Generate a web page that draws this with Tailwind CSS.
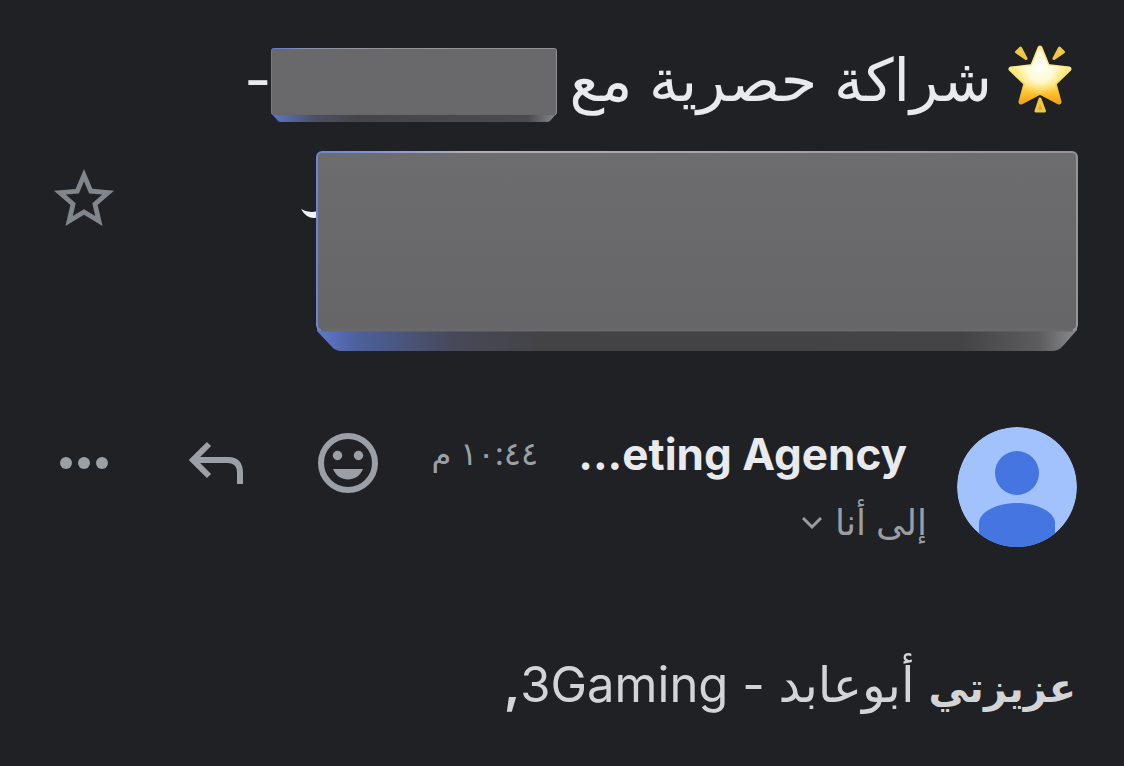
<!DOCTYPE html>
<html lang="ar" dir="rtl">
<head>
  <meta charset="UTF-8" />
  <meta name="viewport" content="width=device-width, initial-scale=1.0" />
  <title>شراكة حصرية</title>
  <script src="https://cdn.jsdelivr.net/npm/@tailwindcss/browser@4"></script>
</head>
<body class="min-h-screen bg-[#202125] font-['Inter','DejaVu_Sans',sans-serif] text-[#e8eaed]">
  <!-- Subject -->
  <header class="flex items-center justify-between pt-10 pr-[46px] pl-[54px]">
    <h1 class="min-w-0 text-[59px] leading-[80px] font-normal">
      <span class="flex h-[90px] items-start">
        <svg class="mr-1 ml-3.5 h-[76px] w-[68px] shrink-0" viewBox="0 0 68 76" aria-hidden="true">
          <defs>
            <linearGradient id="starFill" x1="0" y1="0" x2="0" y2="1">
              <stop offset="0" stop-color="#fbe07c" />
              <stop offset="0.35" stop-color="#fdeb8c" />
              <stop offset="0.62" stop-color="#fddc58" />
              <stop offset="0.85" stop-color="#fbc02c" />
              <stop offset="1" stop-color="#f2a51a" />
            </linearGradient>
            <radialGradient id="starGlow" cx="34" cy="28" r="27" gradientUnits="userSpaceOnUse">
              <stop offset="0" stop-color="#fffffa" />
              <stop offset="0.5" stop-color="#fffde0" stop-opacity="0.9" />
              <stop offset="1" stop-color="#fff6b0" stop-opacity="0" />
            </radialGradient>
            <linearGradient id="rayFill" x1="0" y1="0" x2="0" y2="1">
              <stop offset="0" stop-color="#f8df62" />
              <stop offset="1" stop-color="#e9a523" />
            </linearGradient>
          </defs>
          <path d="M34 8 L41.500 26.500 L63 29 L48 43.500 L53 62 L34 52 L15 62 L20 43.500 L5 29 L26.500 26.500 Z" fill="url(#starFill)" stroke="url(#starFill)" stroke-width="5" stroke-linejoin="round" />
          <path d="M34 8 L41.500 26.500 L63 29 L48 43.500 L53 62 L34 52 L15 62 L20 43.500 L5 29 L26.500 26.500 Z" fill="url(#starGlow)" stroke="url(#starGlow)" stroke-width="2" stroke-linejoin="round" />
          <path d="M10.500 12 L14.500 8 L20 18.500 Z M57.500 12 L53.500 8 L48 18.500 Z M34 59 L30 71 L38.500 71 Z" fill="url(#rayFill)" stroke="#f0c645" stroke-width="3" stroke-linejoin="round" />
        </svg>
        <span class="whitespace-nowrap">شراكة حصرية مع</span>
        <svg class="mt-[7px] mr-3 h-[76px] w-[286px] shrink-0" viewBox="0 0 286 76" aria-hidden="true">
          <defs>
            <linearGradient id="smallEdge">
              <stop offset="0" stop-color="#5c7cd0" />
              <stop offset="0.13" stop-color="#8d92a6" />
              <stop offset="0.4" stop-color="#98989a" />
              <stop offset="1" stop-color="#929294" />
            </linearGradient>
            <linearGradient id="smallBase">
              <stop offset="0" stop-color="#5c78c8" />
              <stop offset="0.15" stop-color="#4b5068" />
              <stop offset="0.3" stop-color="#454547" />
              <stop offset="0.9" stop-color="#4c4c4e" />
              <stop offset="1" stop-color="#8a8a8c" />
            </linearGradient>
          </defs>
          <path d="M0 66 L286 66 L279 74 Q278 75 276 75 L10 75 Q8 75 7 74 Z" fill="url(#smallBase)" />
          <rect x="0.5" y="1.5" width="285" height="66" rx="2" fill="#69696b" stroke="url(#smallEdge)" />
          <path d="M2 67.500 H284" stroke="#666668" />
        </svg>
        <span>-</span>
      </span>
      <span class="mt-5 flex items-start">
        <svg class="h-[202px] w-[778px]" viewBox="0 0 778 202" aria-hidden="true">
          <defs>
            <linearGradient id="topEdge">
              <stop offset="0" stop-color="#6d83da" />
              <stop offset="0.08" stop-color="#8793d0" />
              <stop offset="0.2" stop-color="#b0b0b4" />
              <stop offset="1" stop-color="#959597" />
            </linearGradient>
            <linearGradient id="face" x1="0" y1="0" x2="0" y2="1">
              <stop offset="0" stop-color="#6d6d6f" />
              <stop offset="0.5" stop-color="#69696b" />
              <stop offset="1" stop-color="#666668" />
            </linearGradient>
            <linearGradient id="base">
              <stop offset="0" stop-color="#5f79cc" />
              <stop offset="0.05" stop-color="#4d619f" />
              <stop offset="0.18" stop-color="#474958" />
              <stop offset="0.3" stop-color="#434345" />
              <stop offset="0.85" stop-color="#444446" />
              <stop offset="0.95" stop-color="#5c5c5e" />
              <stop offset="1" stop-color="#8b8b8d" />
            </linearGradient>
          </defs>
          <path d="M1 59 Q8 63.500 18 61 L18 67.500 Q7 70 1 59 Z" fill="#f4f4f6" />
          <path d="M17 176 L777 176 L777 180 L762 197 Q758 201 752 201 L42 201 Q36 201 33 198 L17 181 Z" fill="url(#base)" />
          <rect x="17" y="2" width="760" height="178" rx="5" fill="url(#face)" stroke="url(#topEdge)" stroke-width="2" />
          <path d="M21 180 H773" stroke="#69696b" stroke-width="3" />
        </svg>
      </span>
    </h1>
    <button type="button" aria-label="تمييز بنجمة" class="mt-1.5 shrink-0">
      <svg class="size-[60px]" viewBox="2 2 20 20" fill="#80868b" aria-hidden="true">
        <path d="M22 9.24l-7.19-.62L12 2 9.19 8.63 2 9.24l5.46 4.73L5.82 21 12 17.27 18.18 21l-1.63-7.03L22 9.24zM12 15.4l-3.76 2.27 1-4.28-3.32-2.88 4.38-.38L12 6.1l1.71 4.04 4.38.38-3.32 2.88 1 4.28L12 15.4z" />
      </svg>
    </button>
  </header>

  <!-- Sender -->
  <section class="mt-[75px] flex items-start pr-[47px] pl-[54px]">
    <svg class="size-[120px] shrink-0 rounded-full" viewBox="0 0 120 120" role="img" aria-label="صورة المرسل">
      <circle cx="60" cy="60" r="60" fill="#a1c2fd" />
      <circle cx="60" cy="46" r="22" fill="#4475e0" />
      <path d="M22 120 V96 C22 84 42 76 60 76 C78 76 98 84 98 96 V120 Z" fill="#4475e0" />
    </svg>
    <div class="mr-[30px] min-w-0">
      <div class="flex h-[54px] items-center whitespace-nowrap">
        <span class="mr-5 text-[44px] font-bold" dir="ltr">...eting Agency</span>
        <time class="mr-10 text-[32px] text-[#9aa0a6]">١٠:٤٤ م</time>
      </div>
      <button type="button" class="flex h-[82px] items-center gap-[13px] text-[36px] text-[#9a9da2]">
        إلى أنا
        <svg class="size-5" viewBox="0 0 20 20" fill="none" stroke="currentColor" stroke-width="3" aria-hidden="true">
          <path d="M1 6 L10 15 L19 6" />
        </svg>
      </button>
    </div>
    <div class="mr-auto flex shrink-0 gap-[72px] pt-[6px] text-[#9aa0a6]">
      <button type="button" aria-label="إضافة تفاعل">
        <svg class="size-[60px]" viewBox="0 0 60 60" fill="currentColor" aria-hidden="true">
          <circle cx="30" cy="30" r="27" fill="none" stroke="currentColor" stroke-width="6" />
          <circle cx="19.500" cy="22.500" r="4.700" />
          <circle cx="40.500" cy="22.500" r="4.700" />
          <path d="M15 36 H45 C42 43 36.500 46.500 30 46.500 C23.500 46.500 18 43 15 36 Z" />
        </svg>
      </button>
      <button type="button" aria-label="رد">
        <svg class="size-[60px]" viewBox="0 0 60 60" fill="none" stroke="currentColor" stroke-width="6" aria-hidden="true">
          <path d="M23 11 L7 27 L23 43" />
          <path d="M7 27 H42 Q54 27 54 40 V51" />
        </svg>
      </button>
      <button type="button" aria-label="المزيد">
        <svg class="size-[60px]" viewBox="0 0 60 60" fill="currentColor" aria-hidden="true">
          <circle cx="12" cy="30" r="6" />
          <circle cx="30" cy="30" r="6" />
          <circle cx="48" cy="30" r="6" />
        </svg>
      </button>
    </div>
  </section>

  <!-- Message -->
  <main class="mt-[87px] pr-[48px] pl-[54px] text-[49px] leading-[70px] text-[#d3d4d6]">
    <p><strong class="text-[40px] font-bold">عزيزتي</strong> أبوعابد - 3Gaming<strong class="font-bold">,</strong></p>
  </main>
</body>
</html>
